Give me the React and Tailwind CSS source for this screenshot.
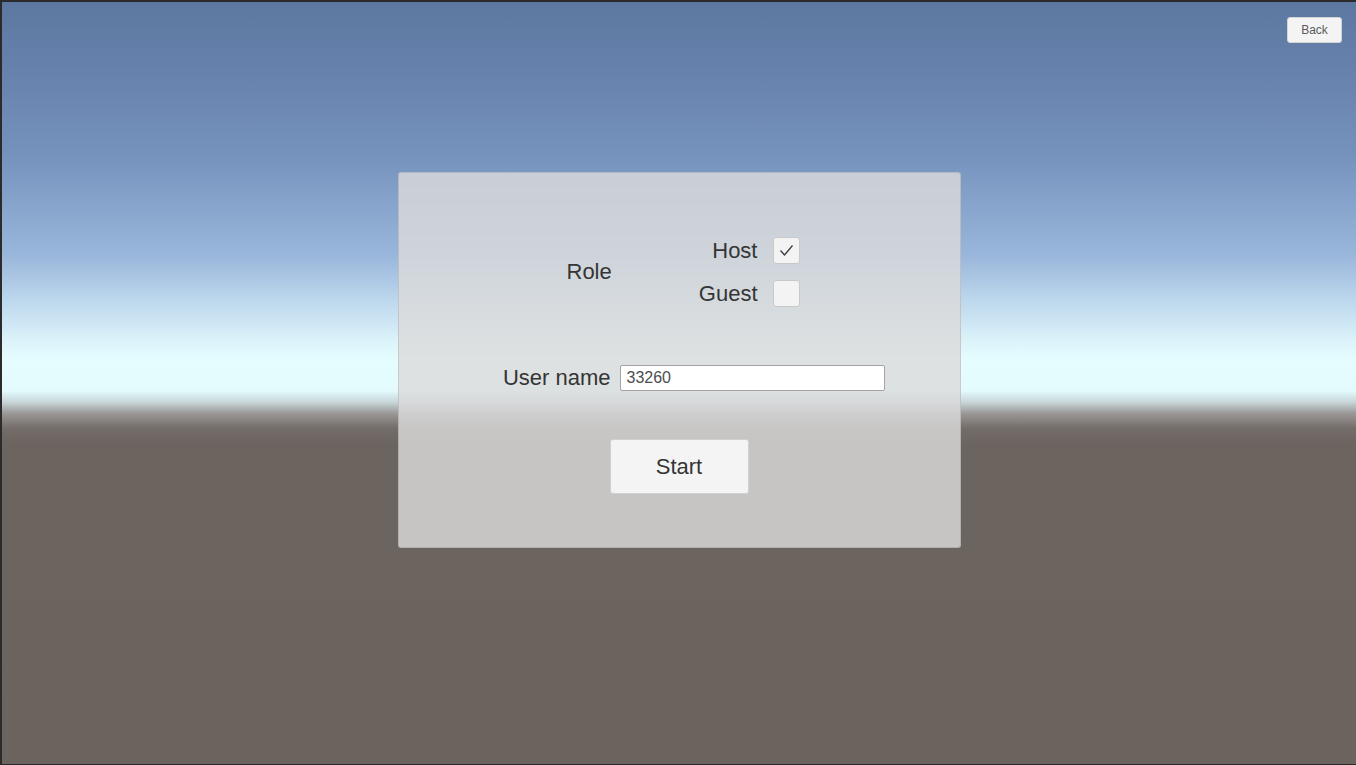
import React, { useState } from "react";

const CheckBox = ({ checked, onClick }) => (
  <button
    onClick={onClick}
    className="flex h-[27px] w-[27px] items-center justify-center rounded-[3px] border border-[#c9c9c9] bg-[#f3f3f3]"
  >
    {checked && (
      <svg width="19" height="19" viewBox="0 0 19 19" fill="none">
        <polyline points="3.5,9.5 7.5,14 15.5,4.5" stroke="#3c3c3c" strokeWidth="1.3" strokeLinejoin="round" />
      </svg>
    )}
  </button>
);

export default function App() {
  const [role, setRole] = useState("host");
  const [name, setName] = useState("33260");

  return (
    <div className="h-[765px] w-[1356px] bg-[#2b2b2b] pl-[2px] pt-[2px] pb-[1px] font-['Liberation_Sans',Arial,sans-serif]">
      <div className="flex h-full flex-col bg-[linear-gradient(to_bottom,#5d78a0_0%,#6580aa_8%,#7592bd_20%,#98b5da_33%,#bcd6ec_39%,#dcf3fa_44.5%,#e6fdff_47%,#e4fbfe_51%,#c8d6d8_52.5%,#9a9796_54%,#736c68_56%,#6b645f_58%,#6a635e_100%)]">
        <div className="flex justify-end pt-[15px] pr-[14px]">
          <button className="h-[26px] w-[55px] rounded-[3px] border border-[#d4d4d4] bg-[#f4f4f4] text-[12px] text-[#5a5a5a]">
            Back
          </button>
        </div>

        <div className="mx-auto mt-[129px] w-[563px] rounded-[3px] border border-black/10 bg-[rgba(218,218,218,0.82)] pt-[64px] pb-[53px]">
          <div className="flex items-center pl-[168px]">
            <div className="w-[131px] text-[22px] leading-none text-[#353535]">Role</div>
            <div className="flex w-[102px] flex-col items-end gap-4">
              <div className="flex items-center gap-[15px]">
                <span className="text-[22px] leading-none text-[#353535]">Host</span>
                <CheckBox checked={role === "host"} onClick={() => setRole("host")} />
              </div>
              <div className="flex items-center gap-[15px]">
                <span className="text-[22px] leading-none text-[#353535]">Guest</span>
                <CheckBox checked={role === "guest"} onClick={() => setRole("guest")} />
              </div>
            </div>
          </div>

          <div className="mt-[58px] flex items-center">
            <div className="w-[212px] text-right text-[22px] leading-none text-[#353535]">User name</div>
            <input
              value={name}
              onChange={(e) => setName(e.target.value)}
              className="ml-[9px] h-[26px] w-[265px] rounded-[2px] border border-[#a3a3a3] bg-white pl-[6px] text-[16px] text-[#4d4d4d] outline-none"
            />
          </div>

          <div className="mt-[48px] flex justify-center">
            <button className="h-[55px] w-[139px] rounded-[3px] border border-[#d0d0d0] bg-[#f4f4f4] text-[22px] leading-none text-[#353535]">
              Start
            </button>
          </div>
        </div>
      </div>
    </div>
  );
}
